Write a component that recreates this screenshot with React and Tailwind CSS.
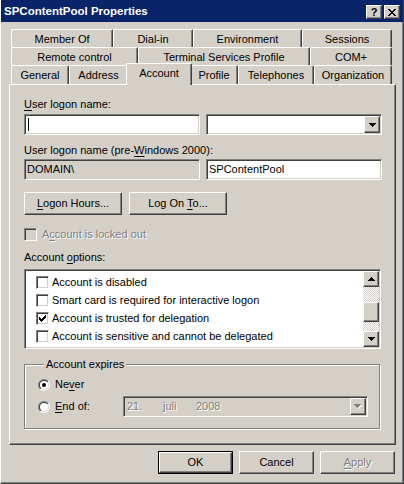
import React from "react";

// Classic 3D bevels
const raised =
  "border border-t-white border-l-white border-r-[#404040] border-b-[#404040] shadow-[inset_-1px_-1px_0_#808080]";
const sunken =
  "border border-t-[#808080] border-l-[#808080] border-r-white border-b-white shadow-[inset_1px_1px_0_#404040,inset_-1px_-1px_0_#d4d0c8]";
const etched = "text-[#808080] [text-shadow:1px_1px_0_#ffffff]";

function DownArrow({ disabled }) {
  if (disabled) {
    return (
      <svg width="8" height="5" viewBox="0 0 8 5" shapeRendering="crispEdges">
        <path fill="#ffffff" d="M1 1h7v1H1zM2 2h5v1H2zM3 3h3v1H3zM4 4h1v1H4z" />
        <path fill="#808080" d="M0 0h7v1H0zM1 1h5v1H1zM2 2h3v1H2zM3 3h1v1H3z" />
      </svg>
    );
  }
  return (
    <svg width="7" height="4" viewBox="0 0 7 4" shapeRendering="crispEdges">
      <path fill="#000" d="M0 0h7v1H0zM1 1h5v1H1zM2 2h3v1H2zM3 3h1v1H3z" />
    </svg>
  );
}

function UpArrow() {
  return (
    <svg width="7" height="4" viewBox="0 0 7 4" shapeRendering="crispEdges">
      <path fill="#000" d="M3 0h1v1H3zM2 1h3v1H2zM1 2h5v1H1zM0 3h7v1H0z" />
    </svg>
  );
}

function CloseGlyph() {
  return (
    <svg width="8" height="7" viewBox="0 0 8 7" shapeRendering="crispEdges">
      <path
        fill="#000"
        d="M0 0h2v1H0zM6 0h2v1H6zM1 1h2v1H1zM5 1h2v1H5zM2 2h4v1H2zM3 3h2v1H3zM2 4h4v1H2zM1 5h2v1H1zM5 5h2v1H5zM0 6h2v1H0zM6 6h2v1H6z"
      />
    </svg>
  );
}

function CheckGlyph() {
  return (
    <svg width="7" height="7" viewBox="0 0 7 7" shapeRendering="crispEdges">
      <path
        fill="#000"
        d="M6 0h1v1H6zM5 1h2v1H5zM0 2h1v1H0zM4 2h3v1H4zM0 3h2v1H0zM3 3h3v1H3zM0 4h5v1H0zM1 5h3v1H1zM2 6h1v1H2z"
      />
    </svg>
  );
}

function Check({ checked, disabled }) {
  return (
    <span
      className={`w-[13px] h-[13px] shrink-0 flex items-center justify-center ${sunken} ${
        disabled ? "bg-[#d4d0c8]" : "bg-white"
      }`}
    >
      {checked && <CheckGlyph />}
    </span>
  );
}

function Radio({ checked }) {
  return (
    <svg width="12" height="12" viewBox="0 0 12 12" className="shrink-0">
      <defs>
        <linearGradient id="radio-outer" x1="0" y1="0" x2="1" y2="1">
          <stop offset="0.5" stopColor="#808080" />
          <stop offset="0.5" stopColor="#ffffff" />
        </linearGradient>
        <linearGradient id="radio-inner" x1="0" y1="0" x2="1" y2="1">
          <stop offset="0.5" stopColor="#404040" />
          <stop offset="0.5" stopColor="#d4d0c8" />
        </linearGradient>
      </defs>
      <circle cx="6" cy="6" r="6" fill="url(#radio-outer)" />
      <circle cx="6" cy="6" r="5" fill="url(#radio-inner)" />
      <circle cx="6" cy="6" r="4" fill="#ffffff" />
      {checked && <circle cx="6" cy="6" r="2" fill="#000" />}
    </svg>
  );
}

function Tab({ label, className, selected }) {
  return (
    <div
      className={`flex justify-center items-start pt-[3px] whitespace-nowrap bg-[#d4d0c8] border-t border-l border-r border-t-white border-l-white border-r-[#404040] shadow-[inset_-1px_0_0_#808080] rounded-tl-[2px] rounded-tr-[2px] ${
        selected ? "relative z-10 h-[22px] -mb-px -mx-[2px]" : "h-full"
      } ${className}`}
    >
      {label}
    </div>
  );
}

function Button({ children, className, disabled }) {
  return (
    <div
      className={`h-[23px] flex items-center justify-center bg-[#d4d0c8] ${raised} ${
        disabled ? etched : ""
      } ${className}`}
    >
      {children}
    </div>
  );
}

const options = [
  { label: "Account is disabled", checked: false },
  { label: "Smart card is required for interactive logon", checked: false },
  { label: "Account is trusted for delegation", checked: true },
  { label: "Account is sensitive and cannot be delegated", checked: false },
];

export default function App() {
  return (
    <div className="w-[404px] h-[484px] overflow-hidden bg-[#d4d0c8] flex flex-col border-l border-l-white border-r border-r-[#404040] border-b border-b-[#404040] shadow-[inset_-1px_-1px_0_#808080] font-['Liberation_Sans',Arial,sans-serif] text-[11px] leading-[13px] text-black select-none">
      {/* Caption bar */}
      <div className="h-[22px] shrink-0 bg-[#0a246a] flex items-start pl-[3px] pr-[3px]">
        <span className="mt-[5px] text-white font-bold text-[11.5px] leading-[13px] whitespace-nowrap">
          SPContentPool Properties
        </span>
        <div className="ml-auto mt-[5px] flex gap-[2px]">
          <div className={`w-[16px] h-[14px] bg-[#d4d0c8] flex items-center justify-center font-bold text-[11px] leading-[11px] ${raised}`}>
            ?
          </div>
          <div className={`w-[16px] h-[14px] bg-[#d4d0c8] flex items-center justify-center ${raised}`}>
            <CloseGlyph />
          </div>
        </div>
      </div>

      <div className="pl-[8px] flex flex-col">
        {/* Tab strip, three rows */}
        <div className="mt-[7px] ml-[2px] w-[381px] flex flex-col">
          <div className="flex h-[18px]">
            <Tab label="Member Of" className="w-[102px]" />
            <Tab label="Dial-in" className="w-[80px]" />
            <Tab label="Environment" className="w-[109px]" />
            <Tab label="Sessions" className="w-[90px]" />
          </div>
          <div className="flex h-[18px]">
            <Tab label="Remote control" className="w-[127px]" />
            <Tab label="Terminal Services Profile" className="w-[172px]" />
            <Tab label="COM+" className="w-[82px]" />
          </div>
          <div className="flex items-end h-[19px]">
            <Tab label="General" className="w-[58px]" />
            <Tab label="Address" className="w-[59px]" />
            <Tab label="Account" className="w-[66px]" selected />
            <Tab label="Profile" className="w-[48px]" />
            <Tab label="Telephones" className="w-[76px]" />
            <Tab label="Organization" className="w-[78px]" />
          </div>
        </div>

        {/* Page */}
        <div className="w-[387px] h-[361px] shrink-0 flex flex-col items-start pl-[14px] border border-t-white border-l-white border-r-[#404040] border-b-[#404040] shadow-[inset_-1px_-1px_0_#808080]">
          <div className="mt-[13px]">
            <span className="underline underline-offset-2">U</span>ser logon name:
          </div>
          <div className="mt-[3px] flex gap-[6px]">
            <div className={`w-[176px] h-[21px] bg-white flex items-center pl-[3px] ${sunken}`}>
              <span className="w-px h-[13px] bg-black" />
            </div>
            <div className={`w-[176px] h-[21px] bg-white flex justify-end items-stretch p-px ${sunken}`}>
              <div className={`w-[16px] bg-[#d4d0c8] flex items-center justify-center ${raised}`}>
                <DownArrow />
              </div>
            </div>
          </div>

          <div className="mt-[9px]">
            User logon name (pre-<span className="underline underline-offset-2">W</span>indows 2000):
          </div>
          <div className="mt-[2px] flex gap-[6px]">
            <div className={`w-[176px] h-[21px] bg-[#d4d0c8] flex items-center pl-[2px] ${sunken}`}>
              DOMAIN\
            </div>
            <div className={`w-[176px] h-[21px] bg-white flex items-center pl-[2px] ${sunken}`}>
              SPContentPool
            </div>
          </div>

          <div className="mt-[12px] flex gap-[7px]">
            <Button className="w-[98px]">
              <span>
                <span className="underline underline-offset-2">L</span>ogon Hours...
              </span>
            </Button>
            <Button className="w-[98px]">
              <span>
                Log On <span className="underline underline-offset-2">T</span>o...
              </span>
            </Button>
          </div>

          <div className="mt-[13px] flex items-center gap-[5px]">
            <Check disabled />
            <span className={etched}>
              A<span className="underline underline-offset-2">c</span>count is locked out
            </span>
          </div>

          <div className="mt-[10px]">
            Account <span className="underline underline-offset-2">o</span>ptions:
          </div>

          {/* Options list with scroll bar */}
          <div className={`mt-[5px] w-[357px] h-[80px] bg-white flex ${sunken} p-px`}>
            <div className="flex-1 flex flex-col pt-[2px] pl-[10px]">
              {options.map((o) => (
                <div key={o.label} className="h-[18px] flex items-center gap-[3px] whitespace-nowrap">
                  <Check checked={o.checked} />
                  <span>{o.label}</span>
                </div>
              ))}
            </div>
            <div className="w-[16px] flex flex-col">
              <div className={`h-[16px] bg-[#d4d0c8] flex items-center justify-center ${raised}`}>
                <UpArrow />
              </div>
              <div className="h-[15px] bg-[repeating-conic-gradient(#ffffff_0%_25%,#d4d0c8_0%_50%)] bg-[length:2px_2px]" />
              <div className={`h-[20px] bg-[#d4d0c8] ${raised}`} />
              <div className="h-[9px] bg-[repeating-conic-gradient(#ffffff_0%_25%,#d4d0c8_0%_50%)] bg-[length:2px_2px]" />
              <div className={`h-[16px] bg-[#d4d0c8] flex items-center justify-center ${raised}`}>
                <DownArrow />
              </div>
            </div>
          </div>

          {/* Account expires group */}
          <fieldset className="mt-[9px] w-[356px] pl-[13px] pb-[11px] border border-[#808080] shadow-[inset_1px_1px_0_#ffffff,1px_1px_0_#ffffff]">
            <legend className="ml-[6px] px-[2px] bg-[#d4d0c8]">Account expires</legend>
            <div className="mt-[7px] flex items-center gap-[5px]">
              <Radio checked />
              <span>
                Ne<span className="underline underline-offset-2">v</span>er
              </span>
            </div>
            <div className="mt-[5px] h-[21px] flex items-center">
              <div className="w-[85px] flex items-center gap-[5px]">
                <Radio />
                <span>
                  <span className="underline underline-offset-2">E</span>nd of:
                </span>
              </div>
              <div className={`w-[245px] h-[21px] bg-[#d4d0c8] flex items-stretch ${sunken} p-px`}>
                <div className={`flex-1 flex items-center pl-[2px] ${etched}`}>
                  <span className="w-[36px]">21.</span>
                  <span className="w-[33px]">juli</span>
                  <span>2008</span>
                </div>
                <div className={`w-[16px] bg-[#d4d0c8] flex items-center justify-center ${raised}`}>
                  <DownArrow disabled />
                </div>
              </div>
            </div>
          </fieldset>
        </div>

        {/* Dialog buttons */}
        <div className="mt-[6px] ml-[149px] flex gap-[6px]">
          <div className="w-[75px] h-[23px] border border-black">
            <div className={`h-full bg-[#d4d0c8] flex items-center justify-center ${raised}`}>OK</div>
          </div>
          <Button className="w-[75px]">Cancel</Button>
          <Button className="w-[75px]" disabled>
            <span>
              <span className="underline underline-offset-2">A</span>pply
            </span>
          </Button>
        </div>
      </div>
    </div>
  );
}
